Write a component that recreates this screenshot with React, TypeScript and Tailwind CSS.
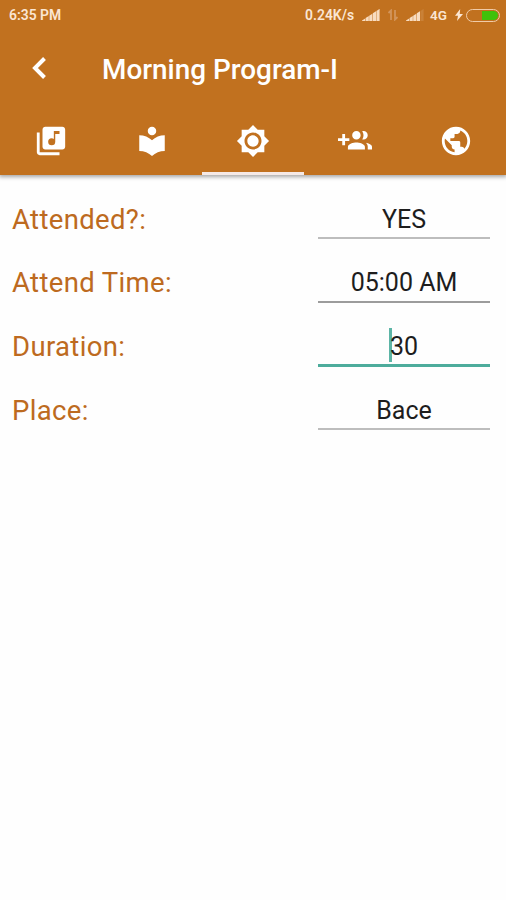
import { MdBrightnessHigh, MdLibraryMusic, MdLocalLibrary, MdPublic } from 'react-icons/md';

// ─── Data ─────────────────────────────────────────────────────────────────────
const fields = [
  { label: 'Attended?:', value: 'YES', focused: false, line: 'bg-[#bdbdbd]' },
  { label: 'Attend Time:', value: '05:00 AM', focused: false, line: 'bg-[#9c9c9c]' },
  { label: 'Duration:', value: '30', focused: true, line: 'bg-[#4dac9c]' },
  { label: 'Place:', value: 'Bace', focused: false, line: 'bg-[#bdbdbd]' },
];

const tabs = [
  { name: 'Music', Icon: MdLibraryMusic },
  { name: 'Reading', Icon: MdLocalLibrary },
  { name: 'Morning', Icon: MdBrightnessHigh },
  { name: 'People', Icon: GroupAdd },
  { name: 'World', Icon: MdPublic },
];

// ─── Icons ────────────────────────────────────────────────────────────────────
function GroupAdd({ className }: { className?: string }) {
  return (
    <svg viewBox="0 0 24 24" fill="currentColor" className={className} aria-hidden="true">
      <path d="M8 10H5V7H3v3H0v2h3v3h2v-3h3v-2zm10 1c1.66 0 2.99-1.34 2.99-3S19.66 5 18 5c-.32 0-.63.05-.91.14.57.81.9 1.79.9 2.86s-.34 2.04-.9 2.86c.28.09.59.14.91.14zm-5 0c1.66 0 2.99-1.34 2.99-3S14.66 5 13 5c-1.66 0-3 1.34-3 3s1.34 3 3 3zm6.62 2.16c.83.73 1.38 1.66 1.38 2.84v2h3v-2c0-1.54-2.37-2.49-4.38-2.84zM13 13c-2 0-6 1-6 3v2h12v-2c0-2-4-3-6-3z" />
    </svg>
  );
}

// Bars share one slanted top edge, so the whole thing reads as a wedge
function Signal({ bars }: { bars: number }) {
  return (
    <svg viewBox="0 0 18 12" className="h-3 w-[18px] shrink-0" fill="#f8dcc0" aria-hidden="true">
      {[0, 1, 2, 3, 4].map((i) => (
        <path
          key={i}
          opacity={i < bars ? 1 : 0.15}
          d={`M${i * 3.6} 12V${11.5 - i * 2.4}l3.2-2V12z`}
        />
      ))}
    </svg>
  );
}

function StatusBar() {
  return (
    <div className="flex h-[30px] items-center pr-[6px] pl-[9px] text-[13.9px] font-semibold text-[#fbe6d3]">
      <span className="flex-1">6:35 PM</span>
      <span className="mr-[8px]">0.24K/s</span>
      <Signal bars={5} />
      <svg viewBox="0 0 12 12" className="mx-[7px] size-3 shrink-0" fill="none" stroke="#d2955c" strokeWidth="1.8" aria-hidden="true">
        <path d="M4 11V1.5L1.500 4M8 1v9.500L10.500 8" />
      </svg>
      <Signal bars={4} />
      <span className="ml-[6px] text-[13.5px]">4G</span>
      <svg viewBox="0 0 8 12" className="ml-[8px] h-3 w-2 shrink-0" fill="currentColor" aria-hidden="true">
        <path d="M5.2 0L0 6.8h3L2 12l6-7H4.700z" />
      </svg>
      <span className="ml-[3px] flex h-[13px] w-[34px] shrink-0 justify-end rounded-full border-[1.5px] border-[#f0cba8] p-px">
        <span className="w-[16px] rounded-r-full bg-[#3fc20a]" />
      </span>
    </div>
  );
}

// ─── Screen ───────────────────────────────────────────────────────────────────
export default function App() {
  return (
    <div className="flex h-[900px] w-[506px] flex-col overflow-hidden bg-[#fefefe] font-['Roboto',sans-serif]">
      <header className="h-[175px] shrink-0 bg-[#c1711f] text-white shadow-[0_1px_4px_1px_rgba(0,0,0,0.35)]">
        <StatusBar />

        <div className="flex h-[78px] items-center pl-[32px]">
          <svg viewBox="0 0 14 22" className="mt-[-2px] h-[22px] w-[14px]" fill="none" stroke="currentColor" strokeWidth="4" aria-label="Back">
            <path d="M12.500 1.500L3 11l9.500 9.500" />
          </svg>
          <h1 className="ml-[56px] pt-px text-[27.9px] leading-none font-medium">Morning Program-I</h1>
        </div>

        <nav className="grid h-[67px] grid-cols-5">
          {tabs.map(({ name, Icon }) => (
            <button
              key={name}
              type="button"
              aria-label={name}
              className={`flex justify-center border-b-[3px] pt-4 pl-px ${
                name === 'Morning' ? 'border-[#f5e9e6]' : 'border-transparent'
              }`}
            >
              <Icon className="size-[34px]" />
            </button>
          ))}
        </nav>
      </header>

      <main className="flex flex-col pt-[12px] pr-[16px] pl-[12px]">
        {fields.map(({ label, value, focused, line }) => (
          <div key={label} className="flex h-[63.7px] items-start justify-between">
            <span className="pt-[14.5px] text-[27.5px] leading-[36px] tracking-[0.35px] text-[#bd6a20]">{label}</span>
            <div className="flex w-[172px] flex-col">
              <div className="flex h-[50px] items-center justify-center pt-[15px] text-[25px] text-[#1d1d1d]">
                {focused && <span className="mt-[-4px] -mr-[2px] -ml-px h-[34px] w-[3px] bg-[#5db5a6]" />}
                <span>{value}</span>
              </div>
              <span className={`${line} ${focused ? 'h-[3px]' : 'h-[2px]'}`} />
            </div>
          </div>
        ))}
      </main>
    </div>
  );
}
